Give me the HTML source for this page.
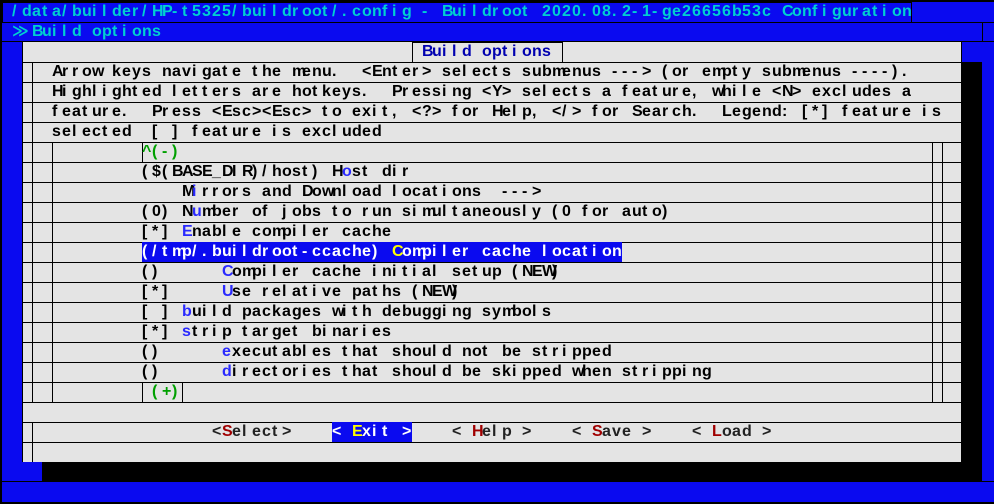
<!DOCTYPE html>
<html><head><meta charset="utf-8"><style>
html,body{margin:0;padding:0;background:#000;width:994px;height:504px;overflow:hidden}
.a{position:absolute;box-sizing:border-box}
.t{position:absolute;font-family:"Liberation Mono","DejaVu Sans Mono",monospace;font-weight:bold;font-size:16.6px;line-height:20px;height:20px;white-space:pre;color:#000}
.t.s{font-family:"Liberation Sans","DejaVu Sans",sans-serif;font-size:16px}
.t.s i{display:inline-block;width:10px;font-style:normal;text-align:left;overflow:visible}
.b{background:#0a0af0}
.g{background:#e4e4e4}
.hl{position:absolute;height:1px;background:#000}
.vl{position:absolute;width:1px;background:#000}
.hk{color:#2a2aff}
.r{color:#a00000}
.y{color:#ffff00}
.gr{color:#00a000}
.c{color:#00d0d0}
</style></head><body>
<div class="a b" style="left:2px;top:2px;width:992px;height:40px"></div>
<div class="a" style="left:2px;top:2px;width:910px;height:21px;border:1px solid #000"></div>
<div class="hl" style="left:2px;top:22px;width:992px"></div>
<div class="hl" style="left:2px;top:41px;width:992px"></div>
<div class="vl" style="left:982px;top:22px;height:20px"></div>
<div class="t c" style="left:12px;top:2px">/data/builder/HP-t5325/buildroot/.config - Buildroot 2020.08.2-1-ge26656b53c Configuration</div>
<div class="t c" style="left:12px;top:22px">≫ Build options</div>

<div class="a b" style="left:2px;top:42px;width:20px;height:420px"></div>
<div class="a b" style="left:962px;top:42px;width:32px;height:20px"></div>
<div class="a" style="left:962px;top:62px;width:20px;height:420px;background:#000"></div>
<div class="a b" style="left:982px;top:62px;width:12px;height:420px"></div>
<div class="a b" style="left:2px;top:462px;width:40px;height:20px"></div>
<div class="a" style="left:42px;top:462px;width:920px;height:20px;background:#000"></div>
<div class="a b" style="left:2px;top:482px;width:992px;height:20px"></div>
<div class="hl" style="left:2px;top:481px;width:992px"></div>

<div class="a g" style="left:22px;top:42px;width:940px;height:420px"></div>
<div class="vl" style="left:22px;top:42px;height:420px"></div>
<div class="vl" style="left:961px;top:42px;height:420px"></div>
<div class="vl" style="left:32px;top:62px;height:80px"></div>
<div class="vl" style="left:32px;top:142px;height:260px"></div>
<div class="vl" style="left:52px;top:142px;height:260px"></div>
<div class="vl" style="left:142px;top:142px;height:20px"></div>
<div class="vl" style="left:142px;top:382px;height:20px"></div>
<div class="vl" style="left:932px;top:142px;height:260px"></div>
<div class="vl" style="left:942px;top:142px;height:260px"></div>
<div class="vl" style="left:32px;top:422px;height:40px"></div>

<div class="hl" style="left:22px;top:62px;width:940px"></div>
<div class="hl" style="left:22px;top:82px;width:940px"></div>
<div class="hl" style="left:22px;top:102px;width:940px"></div>
<div class="hl" style="left:22px;top:122px;width:940px"></div>
<div class="hl" style="left:22px;top:142px;width:940px"></div>
<div class="hl" style="left:22px;top:162px;width:940px"></div>
<div class="hl" style="left:22px;top:182px;width:940px"></div>
<div class="hl" style="left:22px;top:202px;width:940px"></div>
<div class="hl" style="left:22px;top:222px;width:940px"></div>
<div class="hl" style="left:22px;top:242px;width:940px"></div>
<div class="hl" style="left:22px;top:262px;width:940px"></div>
<div class="hl" style="left:22px;top:282px;width:940px"></div>
<div class="hl" style="left:22px;top:302px;width:940px"></div>
<div class="hl" style="left:22px;top:322px;width:940px"></div>
<div class="hl" style="left:22px;top:342px;width:940px"></div>
<div class="hl" style="left:22px;top:362px;width:940px"></div>
<div class="hl" style="left:22px;top:382px;width:940px"></div>
<div class="hl" style="left:22px;top:402px;width:940px"></div>
<div class="hl" style="left:22px;top:422px;width:940px"></div>
<div class="hl" style="left:22px;top:442px;width:940px"></div>

<div class="a" style="left:412px;top:42px;width:151px;height:21px;border:1px solid #000"></div>
<div class="t" style="left:422px;top:42px;color:#0000b0">Build options</div>

<div class="t" style="left:52px;top:62px">Arrow keys navigate the menu.  &lt;Enter&gt; selects submenus ---&gt; (or empty submenus ----).</div>
<div class="t" style="left:52px;top:82px">Highlighted letters are hotkeys.  Pressing &lt;Y&gt; selects a feature, while &lt;N&gt; excludes a</div>
<div class="t" style="left:52px;top:102px">feature.  Press &lt;Esc&gt;&lt;Esc&gt; to exit, &lt;?&gt; for Help, &lt;/&gt; for Search.  Legend: [*] feature is</div>
<div class="t" style="left:52px;top:122px">selected  [ ] feature is excluded</div>

<div class="t gr" style="left:142px;top:142px">^(-)</div>
<div class="t" style="left:142px;top:162px">($(BASE_DIR)/host) H<span class="hk">o</span>st dir</div>
<div class="t" style="left:142px;top:182px">    M<span class="hk">i</span>rrors and Download locations  ---&gt;</div>
<div class="t" style="left:142px;top:202px">(0) N<span class="hk">u</span>mber of jobs to run simultaneously (0 for auto)</div>
<div class="t" style="left:142px;top:222px">[*] <span class="hk">E</span>nable compiler cache</div>
<div class="a b" style="left:142px;top:242px;width:480px;height:20px"></div>
<div class="t" style="left:142px;top:242px;color:#fff">(/tmp/.buildroot-ccache) <span class="y">C</span>ompiler cache location</div>
<div class="t" style="left:142px;top:262px">()      <span class="hk">C</span>ompiler cache initial setup (NEW)</div>
<div class="t" style="left:142px;top:282px">[*]     <span class="hk">U</span>se relative paths (NEW)</div>
<div class="t" style="left:142px;top:302px">[ ] <span class="hk">b</span>uild packages with debugging symbols</div>
<div class="t" style="left:142px;top:322px">[*] <span class="hk">s</span>trip target binaries</div>
<div class="t" style="left:142px;top:342px">()      <span class="hk">e</span>xecutables that should not be stripped</div>
<div class="t" style="left:142px;top:362px">()      <span class="hk">d</span>irectories that should be skipped when stripping</div>
<div class="t gr" style="left:142px;top:382px"> (+)</div>
<div class="vl" style="left:182px;top:382px;height:20px"></div>

<div class="t" style="left:212px;top:422px;color:#222">&lt;<span class="r">S</span>elect&gt;</div>
<div class="a b" style="left:332px;top:422px;width:80px;height:20px"></div>
<div class="t" style="left:332px;top:422px;color:#fff">&lt; <span class="y">E</span>xit &gt;</div>
<div class="t" style="left:452px;top:422px;color:#222">&lt; <span class="r">H</span>elp &gt;</div>
<div class="t" style="left:572px;top:422px;color:#222">&lt; <span class="r">S</span>ave &gt;</div>
<div class="t" style="left:692px;top:422px;color:#222">&lt; <span class="r">L</span>oad &gt;</div>
<script>
(function(){
  function split(node){
    var kids=Array.prototype.slice.call(node.childNodes);
    kids.forEach(function(k){
      if(k.nodeType===3){
        var f=document.createDocumentFragment();
        for(var i=0;i<k.data.length;i++){
          var e=document.createElement('i');e.textContent=k.data[i];f.appendChild(e);
        }
        node.replaceChild(f,k);
      } else if(k.nodeType===1){split(k);}
    });
  }
  var ts=document.querySelectorAll('.t');
  for(var j=0;j<ts.length;j++){split(ts[j]);ts[j].classList.add('s');}
})();
</script>
</body></html>
